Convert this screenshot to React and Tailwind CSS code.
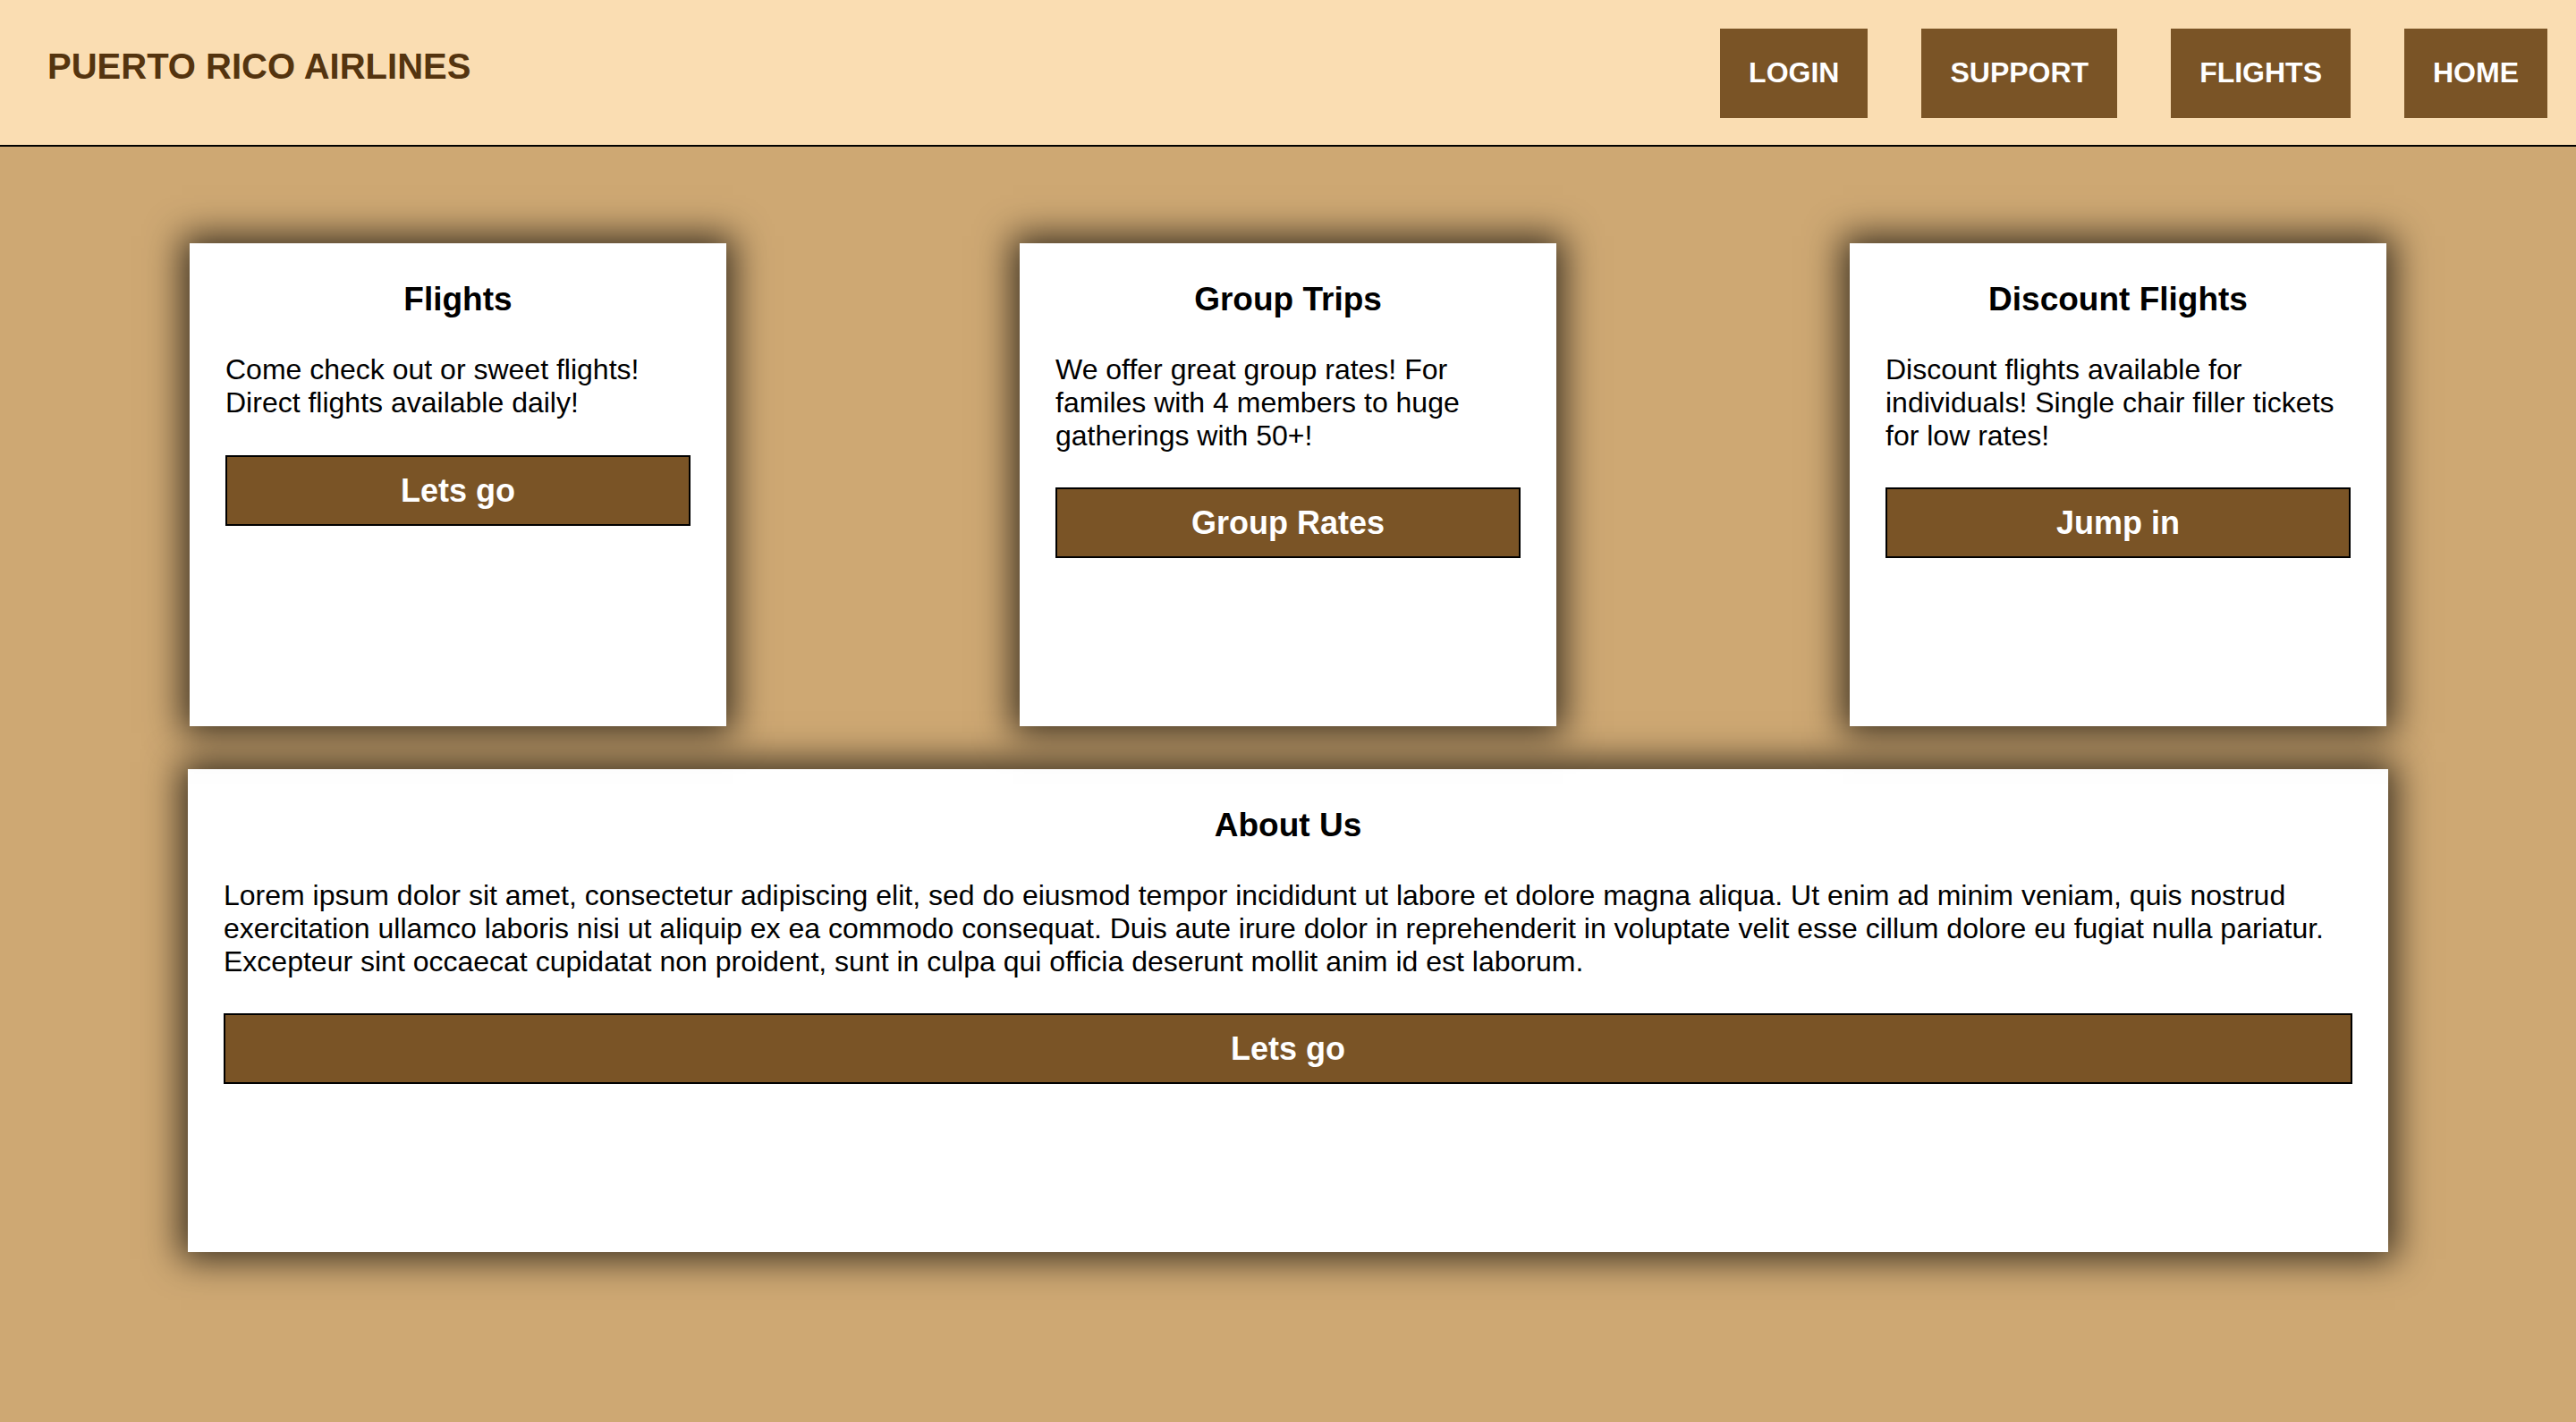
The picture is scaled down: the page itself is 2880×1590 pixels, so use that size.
import React from 'react';

const navLinks = ['LOGIN', 'SUPPORT', 'FLIGHTS', 'HOME'];

const cards = [
    { title: 'Flights', text: 'Come check out or sweet flights! Direct flights available daily!', action: 'Lets go' },
    { title: 'Group Trips', text: 'We offer great group rates! For familes with 4 members to huge gatherings with 50+!', action: 'Group Rates' },
    { title: 'Discount Flights', text: 'Discount flights available for individuals! Single chair filler tickets for low rates!', action: 'Jump in' },
];

const lorem = 'Lorem ipsum dolor sit amet, consectetur adipiscing elit, sed do eiusmod tempor incididunt ut labore et dolore magna aliqua. Ut enim ad minim veniam, quis nostrud exercitation ullamco laboris nisi ut aliquip ex ea commodo consequat. Duis aute irure dolor in reprehenderit in voluptate velit esse cillum dolore eu fugiat nulla pariatur. Excepteur sint occaecat cupidatat non proident, sunt in culpa qui officia deserunt mollit anim id est laborum.';

const Panel = ({ title, text, action, className }) => (
    <div className={`h-[540px] bg-white px-[40px] pt-[41px] shadow-[0_0_38px_8px_rgba(0,0,0,0.72)] ${className}`}>
        <h3 className="text-center text-[37px] leading-[43px] font-bold text-black">{title}</h3>
        <p className="mt-[39px] text-[32px] leading-[36.8px] text-black">{text}</p>
        <button className="mt-[40px] w-full border-2 border-black bg-[#7A5426] py-[17px] text-[36px] leading-[41px] font-bold text-white">
            {action}
        </button>
    </div>
);

const App = () => {
    return (
        <div className="min-h-[1590px] bg-[#CEA873] font-['Liberation_Sans',Arial,sans-serif]">
            {/* Header */}
            <header className="h-[164px] bg-[#FADDB2] border-b-2 border-black flex justify-between items-start">
                <h1 className="pl-[53px] pt-[51px] text-[40px] leading-[46px] font-bold text-[#54340F]">PUERTO RICO AIRLINES</h1>
                <nav className="flex gap-[60px] pt-[32px] pr-[32px]">
                    {navLinks.map((link) => (
                        <a key={link} href="#" className="bg-[#7A5426] px-[32px] pt-[31px] pb-[33px] text-[32px] leading-[36px] font-bold text-white">
                            {link}
                        </a>
                    ))}
                </nav>
            </header>

            {/* Main */}
            <main className="w-[2460px] mx-auto pt-[108px]">
                <div className="flex justify-between px-[2px]">
                    {cards.map((card) => (
                        <Panel key={card.title} {...card} className="w-[600px]" />
                    ))}
                </div>
                <Panel title="About Us" text={lorem} action="Lets go" className="mt-[48px] w-full" />
            </main>
        </div>
    );
};

export default App;
